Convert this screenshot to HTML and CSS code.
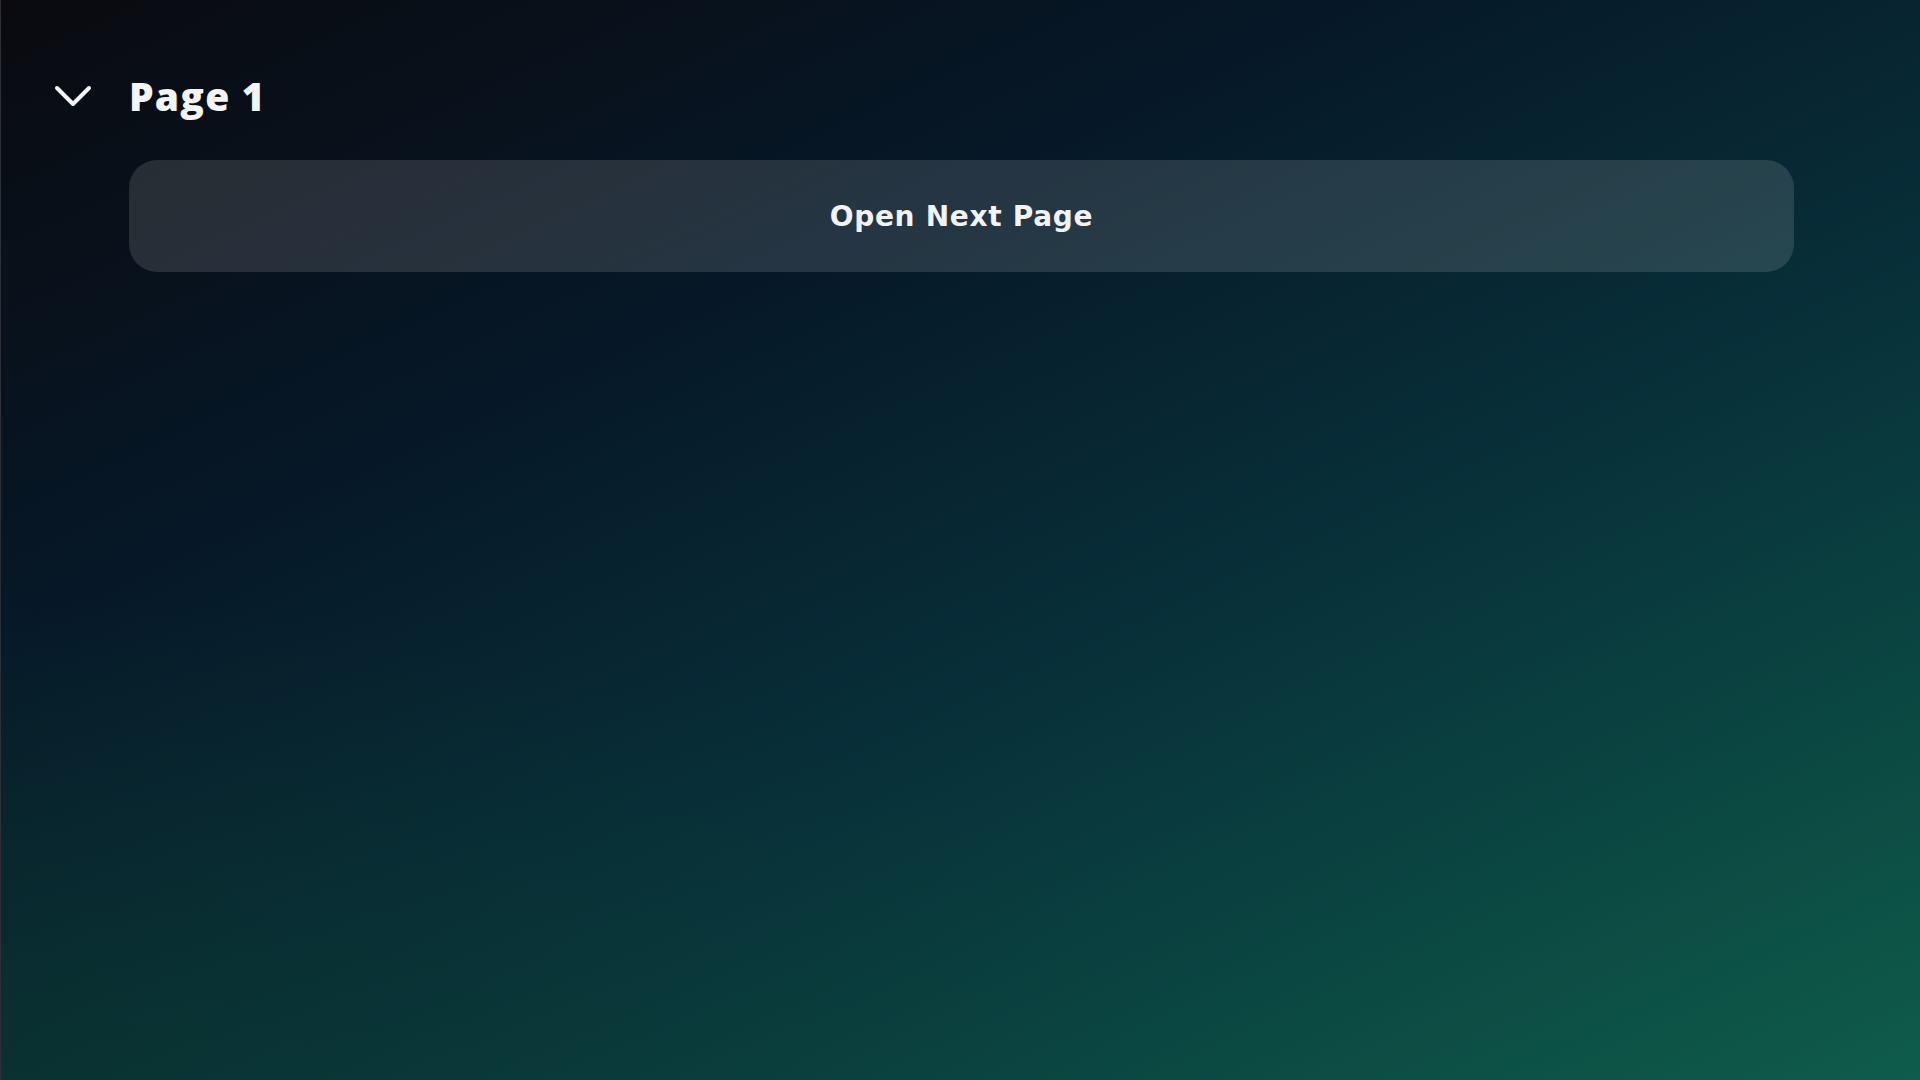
FILE: index.html
```html
<!DOCTYPE html>
<html lang="en">
<head>
<meta charset="utf-8">
<title>Page 1</title>
<link rel="stylesheet" href="styles.css">
</head>
<body>
<main class="page">
  <button class="toggle" aria-label="Collapse">
    <svg width="38" height="24" viewBox="0 0 38 24" fill="none">
      <path d="M3 4 L19 20 L35 4" stroke="#f4f4f5" stroke-width="4" stroke-linecap="round" stroke-linejoin="round"/>
    </svg>
  </button>
  <h1 class="title">Page 1</h1>
  <button class="next-btn">Open Next Page</button>
</main>
</body>
</html>
```
FILE: styles.css
```css
html, body {
  margin: 0;
  padding: 0;
  height: 100%;
}
body {
  background:
    radial-gradient(ellipse 60% 45% at 0% 100%, rgba(14, 60, 40, 0.35), rgba(14, 60, 40, 0) 100%),
    linear-gradient(155deg, #0a0a0f 0%, #061828 32%, #08313a 60%, #0b4943 82%, #0f5c4a 100%);
  border-left: 1px solid #2c3036;
  box-sizing: border-box;
  font-family: "DejaVu Sans", sans-serif;
  color: #f4f4f5;
  overflow: hidden;
}
.page {
  min-height: 100vh;
  box-sizing: border-box;
  padding: 71px 126px 0 53px;
  display: grid;
  grid-template-columns: 38px 1fr;
  grid-template-rows: 50px auto;
  column-gap: 37px;
  row-gap: 39px;
  align-content: start;
}
.toggle {
  background: none;
  border: 0;
  padding: 0;
  width: 38px;
  height: 50px;
  display: flex;
  align-items: center;
  justify-content: center;
  cursor: pointer;
}
.title {
  margin: 0;
  font-family: "Open Sans", sans-serif;
  font-weight: 800;
  font-size: 39px;
  line-height: 50px;
  letter-spacing: 1.2px;
  color: #f4f4f5;
}
.next-btn {
  grid-column: 2;
  height: 112px;
  border: 0;
  border-radius: 28px;
  background: rgba(255, 255, 255, 0.125);
  color: #f2f3f4;
  font-family: "DejaVu Sans", sans-serif;
  font-weight: 700;
  font-size: 28px;
  letter-spacing: 0.7px;
  cursor: pointer;
}
```
